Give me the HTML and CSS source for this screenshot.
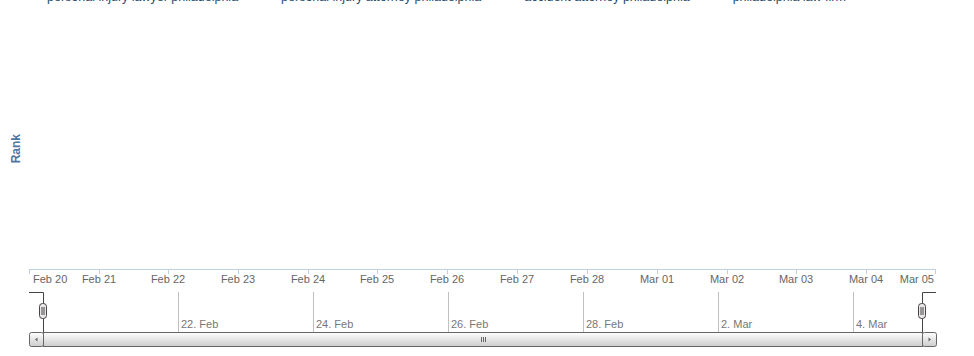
FILE: index.html
```html
<!DOCTYPE html>
<html lang="en">
<head>
    <meta charset="UTF-8">
    <title>Keyword Rank</title>
    <link rel="stylesheet" href="styles.css">
</head>
<body>
    <div class="chart">
        <div class="legend">
            <span class="legend-item">personal injury lawyer philadelphia</span>
            <span class="legend-item">personal injury attorney philadelphia</span>
            <span class="legend-item">accident attorney philadelphia</span>
            <span class="legend-item">philadelphia law firm</span>
        </div>
        <div class="main">
            <div class="y-axis">
                <span class="y-title">Rank</span>
            </div>
            <div class="plot"></div>
        </div>
        <svg class="timeline" width="974" height="94" viewBox="0 0 974 94">
            <defs>
                <linearGradient id="btnGrad" x1="0" y1="0" x2="0" y2="1">
                    <stop offset="0" stop-color="#ffffff"/>
                    <stop offset="1" stop-color="#cccccc"/>
                </linearGradient>
            </defs>

            <!-- x axis -->
            <path class="axis-line" d="M29 7.5 H936"/>
            <path class="tick" d="M29.5 7 V12 M99.5 7 V12 M168.5 7 V12 M238.5 7 V12 M308.5 7 V12 M377.5 7 V12 M447.5 7 V12 M517.5 7 V12 M587.5 7 V12 M657.5 7 V12 M727.5 7 V12 M796.5 7 V12 M866.5 7 V12 M935.5 7 V12"/>
            <g class="axis-labels">
                <text x="33" y="21">Feb 20</text>
                <text x="99" y="21" class="mid">Feb 21</text>
                <text x="168" y="21" class="mid">Feb 22</text>
                <text x="238" y="21" class="mid">Feb 23</text>
                <text x="308" y="21" class="mid">Feb 24</text>
                <text x="377" y="21" class="mid">Feb 25</text>
                <text x="447" y="21" class="mid">Feb 26</text>
                <text x="517" y="21" class="mid">Feb 27</text>
                <text x="587" y="21" class="mid">Feb 28</text>
                <text x="657" y="21" class="mid">Mar 01</text>
                <text x="727" y="21" class="mid">Mar 02</text>
                <text x="796" y="21" class="mid">Mar 03</text>
                <text x="866" y="21" class="mid">Mar 04</text>
                <text x="934" y="21" class="end">Mar 05</text>
            </g>

            <!-- navigator -->
            <path class="nav-grid" d="M178.5 30 V70 M313.5 30 V70 M448.5 30 V70 M583.5 30 V70 M718.5 30 V70 M853.5 30 V70"/>
            <g class="nav-labels">
                <text x="181" y="66">22. Feb</text>
                <text x="316" y="66">24. Feb</text>
                <text x="451" y="66">26. Feb</text>
                <text x="586" y="66">28. Feb</text>
                <text x="721" y="66">2. Mar</text>
                <text x="856" y="66">4. Mar</text>
            </g>
            <path class="nav-outline" d="M29 30.5 H43.5 V70.5 M922.5 70.5 V30.5 H936"/>

            <!-- scrollbar -->
            <rect class="scroll-bar" x="43.5" y="70.5" width="879" height="14"/>
            <path class="rifle" d="M481.5 75 V80 M483.5 75 V80 M485.5 75 V80"/>
            <rect class="scroll-btn" x="29.5" y="70.5" width="14" height="14" rx="2"/>
            <rect class="scroll-btn" x="922.5" y="70.5" width="14" height="14" rx="2"/>
            <path class="arrow" d="M37.5 75.5 L35 77.5 L37.5 79.5 Z"/>
            <path class="arrow" d="M928.5 75.5 L931 77.5 L928.5 79.5 Z"/>

            <!-- handles -->
            <rect class="handle" x="39.5" y="41.5" width="7" height="15" rx="3"/>
            <path class="grip" d="M42 45 V53 M44 45 V53"/>
            <rect class="handle" x="918.5" y="41.5" width="7" height="15" rx="3"/>
            <path class="grip" d="M921 45 V53 M923 45 V53"/>
        </svg>
    </div>
</body>
</html>
```

FILE: styles.css
```css
body {
    margin: 0;
    padding: 0;
    background-color: #fff;
    font-family: "Liberation Sans", Arial, sans-serif;
}
.chart {
    width: 974px;
    height: 356px;
    display: flex;
    flex-direction: column;
    overflow: hidden;
}
.legend {
    height: 4px;
    display: flex;
    gap: 43px;
    padding-left: 47px;
    overflow: visible;
}
.legend-item {
    font-size: 12.5px;
    line-height: 14px;
    margin-top: -10px;
    color: #274b6d;
    white-space: nowrap;
}
.main {
    flex: 1;
    display: flex;
}
.y-axis {
    width: 30px;
    display: flex;
    align-items: center;
    justify-content: center;
    padding-top: 32px;
}
.y-title {
    writing-mode: vertical-rl;
    transform: rotate(180deg);
    font-size: 12px;
    font-weight: bold;
    color: #4d759e;
    margin-left: 2px;
}
.plot {
    flex: 1;
}
.timeline {
    display: block;
    flex: none;
}
.axis-line {
    stroke: #c0d0e0;
    stroke-width: 1;
    fill: none;
}
.tick {
    stroke: #c0d0e0;
    stroke-width: 1;
}
.axis-labels text {
    font-size: 11px;
    fill: #666;
}
.axis-labels .mid {
    text-anchor: middle;
}
.axis-labels .end {
    text-anchor: end;
}
.nav-grid {
    stroke: #c0c0c0;
    stroke-width: 1;
}
.nav-labels text {
    font-size: 11px;
    fill: #777;
}
.nav-outline {
    stroke: #444;
    stroke-width: 1;
    fill: none;
}
.scroll-bar {
    fill: url(#btnGrad);
    stroke: #666;
    stroke-width: 1;
}
.scroll-btn {
    fill: url(#btnGrad);
    stroke: #666;
    stroke-width: 1;
}
.rifle {
    stroke: #666;
    stroke-width: 1;
}
.arrow {
    fill: #666;
}
.handle {
    fill: #ebe7e8;
    stroke: #444;
    stroke-width: 1;
}
.grip {
    stroke: #444;
    stroke-width: 1;
}
```
